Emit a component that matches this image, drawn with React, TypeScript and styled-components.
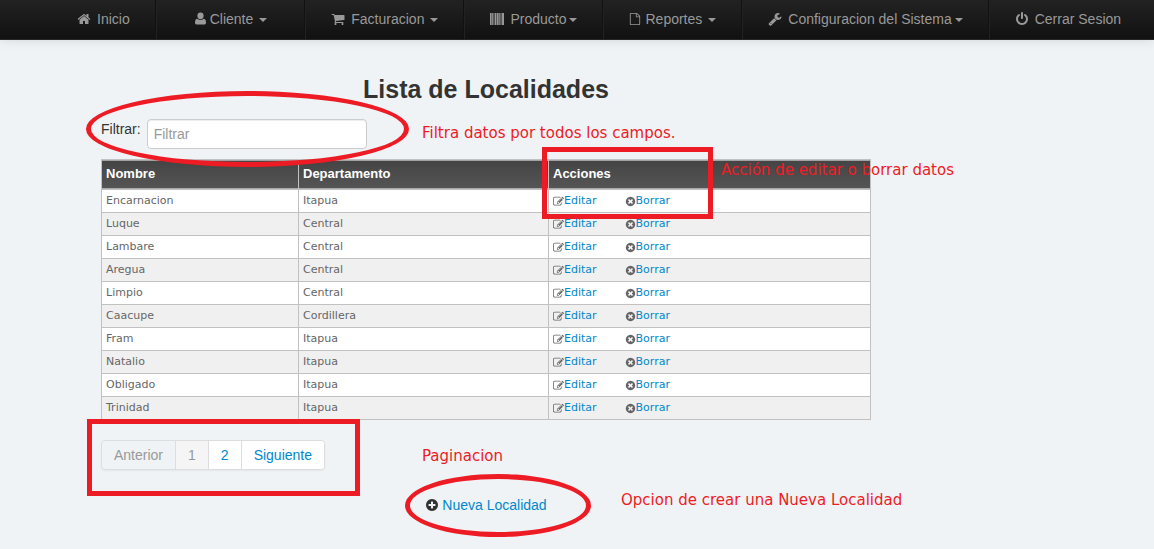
import React, { useState } from 'react';
import styled, { createGlobalStyle } from 'styled-components';

const GlobalStyle = createGlobalStyle`
  *, *::before, *::after { box-sizing: border-box; }
  body {
    margin: 0;
    background: #eff3f6;
    color: #333;
    font: 14px/20px "Liberation Sans", Arial, sans-serif;
  }
  a { color: #0088cc; text-decoration: none; }
  a:hover { text-decoration: underline; }
`;

const CIRCLE =
  'm387-226q0 209-103 385.5t-279.5 279.5-385.5 103-385.5-103-279.5-279.5-103-385.5 103-385.5 279.5-279.5 385.5-103 385.5 103 279.5 279.5 103 385.5z';

const icons = {
  home: 'M1472 992v480q0 26-19 45t-45 19h-384v-384h-256v384h-384q-26 0-45-19t-19-45v-480q0-1 .5-3t.5-3l575-474 575 474q1 2 1 6zm223-69l-62 74q-8 9-21 11h-3q-13 0-21-7l-692-577-692 577q-12 8-24 7-13-2-21-11l-62-74q-8-10-7-23.5t11-21.5l719-599q32-26 76-26t76 26l244 204v-195q0-14 9-23t23-9h192q14 0 23 9t9 23v408l219 182q10 8 11 21.5t-7 23.5z',
  user: 'M832 64a400 430 0 1 1 0 860a400 430 0 1 1 0-860zM430 850q180 170 402 170t402-170q300 0 300 500v70q0 170-180 170h-1044q-180 0-180-170v-70q0-500 300-500z',
  cart: 'M704 1536q0 52-38 90t-90 38-90-38-38-90 38-90 90-38 90 38 38 90zm896 0q0 52-38 90t-90 38-90-38-38-90 38-90 90-38 90 38 38 90zm128-1088v512q0 24-16.5 42.5t-40.5 21.5l-1044 122q13 60 13 70 0 16-24 64h920q26 0 45 19t19 45-19 45-45 19h-1024q-26 0-45-19t-19-45q0-11 8-31.5t16-36 21.5-40 15.5-29.5l-177-823h-204q-26 0-45-19t-19-45 19-45 45-19h256q16 0 28.5 6.5t19.5 15.5 13 24.5 8 26 5.5 29.5 4.5 26h1201q26 0 45 19t19 45z',
  barcode:
    'M0 128h210v1536h-210zM270 128h110v1536h-110zM450 128h120v1536h-120zM640 128h190v1536h-190zM900 128h210v1536h-210zM1180 128h110v1536h-110zM1350 128h120v1536h-120zM1540 128h252v1536h-252z',
  file: 'M1596 380q28 28 48 76t20 88v1152q0 40-28 68t-68 28h-1344q-40 0-68-28t-28-68v-1600q0-40 28-68t68-28h896q40 0 88 20t76 48zm-444-244v376h376q-10-29-22-41l-313-313q-12-12-41-22zm384 1528v-1024h-416q-40 0-68-28t-28-68v-416h-768v1536h1280z',
  wrench: 'M448 1472q0-26-19-45t-45-19-45 19-19 45 19 45 45 19 45-19 19-45zm644-420l-682 682q-37 37-90 37-52 0-91-37l-106-108q-38-36-38-90 0-53 38-91l681-681q39 98 114.5 173.5t173.5 114.5zm634-435q0 39-23 106-47 134-164.5 217.5t-258.5 83.5q-185 0-316.5-131.5t-131.5-316.5 131.5-316.5 316.5-131.5q58 0 121.5 16.5t107.5 46.5q16 11 16 28t-16 28l-293 169v224l193 107q5-3 79-48.5t135.5-81 70.5-35.5q15 0 23.5 10t8.5 25z',
  power: 'M1664 896q0 156-61 298t-164 245-245 164-298 61-298-61-245-164-164-245-61-298q0-182 80.5-343t226.5-270q43-32 95.5-25t83.5 50q32 42 24.5 94.5t-49.5 84.5q-98 74-151.5 181t-53.5 228q0 104 40.5 198.5t109.5 163.5 163.5 109.5 198.5 40.5 198.5-40.5 163.5-109.5 109.5-163.5 40.5-198.5q0-121-53.5-228t-151.5-181q-42-32-49.5-84.5t24.5-94.5q31-43 84-50t95 25q146 109 226.5 270t80.5 343zm-640-768v640q0 52-38 90t-90 38-90-38-38-90v-640q0-52 38-90t90-38 90 38 38 90z',
  edit: 'M888 1184l116-116-152-152-116 116v56h96v96h56zm440-720q-16-16-33 1l-350 350q-17 17-1 33t33-1l350-350q17-17 1-33zm80 594v190q0 119-84.5 203.5t-203.5 84.5h-832q-119 0-203.5-84.5t-84.5-203.5v-832q0-119 84.5-203.5t203.5-84.5h832q63 0 117 25 15 7 18 23 3 17-9 29l-49 49q-14 14-32 8-23-6-45-6h-832q-66 0-113 47t-47 113v832q0 66 47 113t113 47h832q66 0 113-47t47-113v-126q0-13 9-22l64-64q15-15 35-7t20 29zm-96-738l288 288-672 672h-288v-288zm444 132l-92 92-288-288 92-92q28-28 68-28t68 28l152 152q28 28 28 68t-28 68z',
  remove:
    'M1277 1122q0-26-19-45l-181-181 181-181q19-19 19-45 0-27-19-46l-90-90q-19-19-46-19-26 0-45 19l-181 181-181-181q-19-19-45-19-27 0-46 19l-90 90q-19 19-19 46 0 26 19 45l181 181-181 181q-19 19-19 45 0 27 19 46l90 90q19 19 46 19 26 0 45-19l181-181 181 181q19 19 45 19 27 0 46-19l90-90q19-19 19-46z' + CIRCLE,
  plus: 'M1344 960v-128q0-26-19-45t-45-19h-256v-256q0-26-19-45t-45-19h-128q-26 0-45 19t-19 45v256h-256q-26 0-45 19t-19 45v128q0 26 19 45t45 19h256v256q0 26 19 45t45 19h128q26 0 45-19t19-45v-256h256q26 0 45-19t19-45zm320-64q0 209-103 385.5t-279.5 279.5-385.5 103-385.5-103-279.5-279.5-103-385.5 103-385.5 279.5-279.5 385.5-103 385.5 103 279.5 279.5 103 385.5z',
};

type IconName = keyof typeof icons;

const IconSvg = styled.svg<{ $size: number }>`
  flex: none;
  width: ${(p) => p.$size}px;
  height: ${(p) => p.$size}px;
  fill: currentColor;
`;

const Icon = ({ name, size = 14 }: { name: IconName; size?: number }) => (
  <IconSvg $size={size} viewBox="0 0 1792 1792" aria-hidden="true">
    <path d={icons[name]} />
  </IconSvg>
);

const Page = styled.div`
  position: relative;
  padding-bottom: 32px;
`;

const NavBar = styled.nav`
  border-bottom: 1px solid #252525;
  background: linear-gradient(to bottom, #222, #111);
  box-shadow: 0 1px 10px rgba(0, 0, 0, 0.1);
`;

const NavList = styled.ul`
  display: flex;
  margin: 0;
  padding: 0 0 0 52px;
  list-style: none;
`;

const NavItem = styled.li<{ $wide?: boolean }>`
  padding: 0 ${(p) => (p.$wide ? 37 : 25)}px;
  border-right: 1px solid #111;
  border-left: 1px solid #222;
  &:first-child { border-left: 0; }
  &:last-child { border-right: 0; }
`;

const NavLink = styled.a<{ $gap: number }>`
  display: flex;
  align-items: center;
  gap: ${(p) => p.$gap}px;
  height: 39px;
  padding-bottom: 2px;
  color: #999;
  white-space: nowrap;
  &:hover { color: #fff; text-decoration: none; }
`;

const Caret = styled.span<{ $gap: number }>`
  display: inline-block;
  margin-left: ${(p) => p.$gap}px;
  border-top: 4px solid currentColor;
  border-right: 4px solid transparent;
  border-left: 4px solid transparent;
  vertical-align: middle;
`;

const Content = styled.main`
  max-width: 871px;
  padding: 34px 0 0 101px;
`;

const Title = styled.h3`
  margin: 0;
  font-size: 25px;
  line-height: 30px;
  text-align: center;
`;

const Filter = styled.form`
  display: flex;
  gap: 6px;
  margin: 15px 0 10px;
`;

const FilterInput = styled.input`
  width: 220px;
  height: 30px;
  padding: 4px 6px;
  border: 1px solid #ccc;
  border-radius: 4px;
  background: #fff;
  box-shadow: inset 0 1px 1px rgba(0, 0, 0, 0.075);
  color: #555;
  font: inherit;
  &::placeholder { color: #999; opacity: 1; }
`;

const Table = styled.table`
  width: 100%;
  border-collapse: collapse;
  table-layout: fixed;
  color: #666;
  font: 11px/16px Verdana, "DejaVu Sans", sans-serif;
`;

const HeadCell = styled.th<{ $width?: number }>`
  width: ${(p) => (p.$width ? `${p.$width}px` : 'auto')};
  height: 30px;
  padding: 0 4px 1px;
  border: 1px solid #c1c1c1;
  background: linear-gradient(to bottom, #444, #555 28px, #fff 28px);
  color: #fff;
  font: bold 13px/20px "Liberation Sans", Arial, sans-serif;
  text-align: left;
`;

const Row = styled.tr`
  background: #fff;
  &:nth-child(even) { background: #f0f0f0; }
`;

const Cell = styled.td`
  height: 23px;
  padding: 3px 4px;
  border: 1px solid #c1c1c1;
`;

const Actions = styled.div`
  display: flex;
  gap: 28px;
`;

const Action = styled.span`
  display: flex;
  align-items: center;
`;

const Pager = styled.ul`
  display: flex;
  width: max-content;
  margin: 20px 0 25px;
  padding: 0;
  border: 1px solid #ddd;
  border-radius: 4px;
  box-shadow: 0 1px 2px rgba(0, 0, 0, 0.05);
  list-style: none;
  overflow: hidden;
`;

const PagerItem = styled.li`
  & + & { border-left: 1px solid #ddd; }
`;

const PagerButton = styled.button<{ $active?: boolean }>`
  display: block;
  height: 28px;
  padding: 0 12px;
  border: 0;
  background: ${(p) => (p.$active ? '#f5f5f5' : '#fff')};
  color: ${(p) => (p.$active ? '#999' : '#0088cc')};
  font: inherit;
  cursor: pointer;
  &:disabled { background: transparent; color: #999; cursor: default; }
`;

const NewPlace = styled.p`
  display: flex;
  align-items: center;
  justify-content: center;
  gap: 3px;
  margin: 0;
`;

interface Spot {
  $top: number;
  $left: number;
}

const Note = styled.span<Spot>`
  position: absolute;
  top: ${(p) => p.$top}px;
  left: ${(p) => p.$left}px;
  color: #ed1c24;
  font: 15px/20px "DejaVu Sans", Verdana, sans-serif;
  white-space: nowrap;
  pointer-events: none;
`;

const Mark = styled.span<Spot & { $width: number; $height: number; $round?: boolean }>`
  position: absolute;
  top: ${(p) => p.$top}px;
  left: ${(p) => p.$left}px;
  width: ${(p) => p.$width}px;
  height: ${(p) => p.$height}px;
  border: 5px solid #ed1c24;
  border-radius: ${(p) => (p.$round ? '50%' : '0')};
  pointer-events: none;
`;

interface MenuEntry {
  label: string;
  icon: IconName;
  iconSize?: number;
  gap: number;
  caret?: number;
  wide?: boolean;
}

const menu: MenuEntry[] = [
  { label: 'Inicio', icon: 'home', gap: 6 },
  { label: 'Cliente', icon: 'user', gap: 2, caret: 6, wide: true },
  { label: 'Facturacion', icon: 'cart', gap: 6, caret: 6 },
  { label: 'Producto', icon: 'barcode', gap: 6, caret: 3 },
  { label: 'Reportes', icon: 'file', iconSize: 12, gap: 4, caret: 6 },
  { label: 'Configuracion del Sistema', icon: 'wrench', gap: 6, caret: 3 },
  { label: 'Cerrar Sesion', icon: 'power', gap: 6 },
];

const places = [
  ['Encarnacion', 'Itapua'],
  ['Luque', 'Central'],
  ['Lambare', 'Central'],
  ['Aregua', 'Central'],
  ['Limpio', 'Central'],
  ['Caacupe', 'Cordillera'],
  ['Fram', 'Itapua'],
  ['Natalio', 'Itapua'],
  ['Obligado', 'Itapua'],
  ['Trinidad', 'Itapua'],
];

export default function App() {
  const [query, setQuery] = useState('');
  const rows = places.filter((place) => place.join(' ').toLowerCase().includes(query.toLowerCase()));

  return (
    <Page>
      <GlobalStyle />
      <NavBar>
        <NavList>
          {menu.map((m) => (
            <NavItem key={m.label} $wide={m.wide}>
              <NavLink href="#" $gap={m.gap}>
                <Icon name={m.icon} size={m.iconSize} />
                <span>
                  {m.label}
                  {m.caret && <Caret $gap={m.caret} />}
                </span>
              </NavLink>
            </NavItem>
          ))}
        </NavList>
      </NavBar>

      <Content>
        <Title>Lista de Localidades</Title>
        <Filter onSubmit={(e) => e.preventDefault()}>
          <label htmlFor="filtrar">Filtrar:</label>
          <FilterInput
            id="filtrar"
            type="text"
            placeholder="Filtrar"
            value={query}
            onChange={(e) => setQuery(e.target.value)}
          />
        </Filter>
        <Table>
          <thead>
            <tr>
              <HeadCell scope="col" $width={197}>Nombre</HeadCell>
              <HeadCell scope="col" $width={250}>Departamento</HeadCell>
              <HeadCell scope="col">Acciones</HeadCell>
            </tr>
          </thead>
          <tbody>
            {rows.map(([name, department]) => (
              <Row key={name}>
                <Cell>{name}</Cell>
                <Cell>{department}</Cell>
                <Cell>
                  <Actions>
                    <Action>
                      <Icon name="edit" size={11} />
                      <a href="#">Editar</a>
                    </Action>
                    <Action>
                      <Icon name="remove" size={11} />
                      <a href="#">Borrar</a>
                    </Action>
                  </Actions>
                </Cell>
              </Row>
            ))}
          </tbody>
        </Table>
        <Pager>
          <PagerItem><PagerButton type="button" disabled>Anterior</PagerButton></PagerItem>
          <PagerItem><PagerButton type="button" $active>1</PagerButton></PagerItem>
          <PagerItem><PagerButton type="button">2</PagerButton></PagerItem>
          <PagerItem><PagerButton type="button">Siguiente</PagerButton></PagerItem>
        </Pager>
        <NewPlace>
          <Icon name="plus" />
          <a href="#">Nueva Localidad</a>
        </NewPlace>
      </Content>

      <Mark $top={91} $left={86} $width={323} $height={76} $round />
      <Mark $top={147} $left={542} $width={171} $height={72} />
      <Mark $top={419} $left={87} $width={273} $height={77} />
      <Mark $top={474} $left={405} $width={186} $height={63} $round />
      <Note $top={123} $left={422}>Filtra datos por todos los campos.</Note>
      <Note $top={160} $left={721}>Acción de editar o borrar datos</Note>
      <Note $top={446} $left={422}>Paginacion</Note>
      <Note $top={490} $left={621}>Opcion de crear una Nueva Localidad</Note>
    </Page>
  );
}
